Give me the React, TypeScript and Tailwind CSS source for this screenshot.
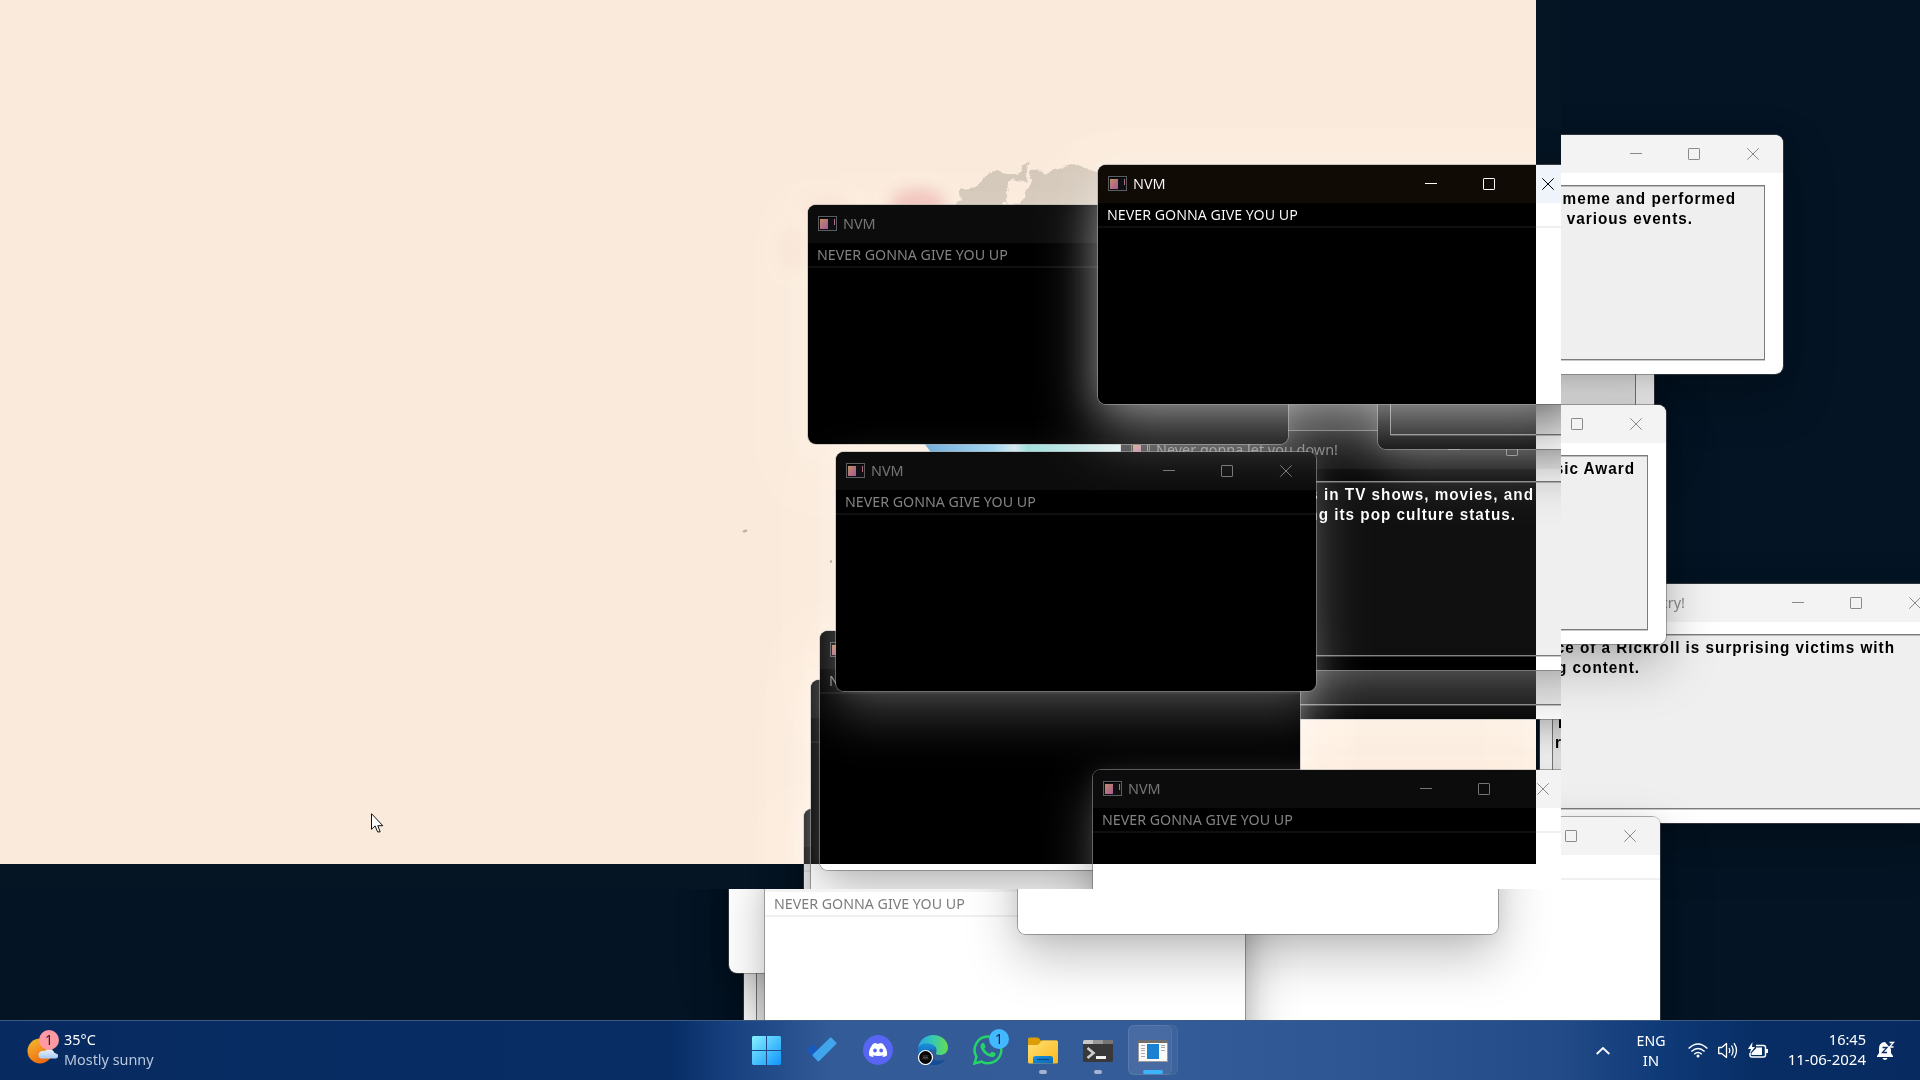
import type { ReactNode } from "react";

type Line = { text: string; place: string };
type WinProps = { at: string; title?: string; active?: boolean; lines?: Line[] };

const INACTIVE = "shadow-[0_0_0_1px_rgba(90,90,90,0.5),0_22px_52px_rgba(0,0,0,0.25),0_2px_20px_rgba(0,0,0,0.08)]";
const ACTIVE = "shadow-[0_0_0_1px_rgba(90,90,90,0.6),0_28px_60px_rgba(0,0,0,0.42),0_2px_36px_rgba(0,0,0,0.28)]";

function AppIcon() {
  return (
    <svg width="19" height="16" viewBox="0 0 19 16" shapeRendering="crispEdges">
      <rect width="19" height="15" fill="#a5a19d" />
      <rect x="1" y="1" width="17" height="13" fill="#efefec" />
      <rect x="1" y="1" width="17" height="1" fill="#fff" />
      <defs>
        <linearGradient id="pane" x1="0" y1="0" x2="1" y2="1">
          <stop offset="0" stopColor="#41709b" />
          <stop offset="1" stopColor="#56a868" />
        </linearGradient>
      </defs>
      <rect x="2" y="3" width="8" height="10" fill="url(#pane)" />
      <rect x="16" y="3" width="1" height="6" fill="#4f9276" />
    </svg>
  );
}

function Win({ at, title = "NVM", active = false, lines }: WinProps) {
  const ink = active ? "text-black" : "text-[#8a8a8a]";
  return (
    <section className={`absolute h-[239px] w-[480px] rounded-lg ${at} ${active ? ACTIVE : INACTIVE}`}>
      <div className="flex h-full flex-col overflow-hidden rounded-lg bg-white">
        <header className={`flex h-[38px] shrink-0 items-center pl-[10px] pr-6 ${active ? "bg-[#eef4f9]" : "bg-[#f3f3f3]"} ${ink}`}>
          <AppIcon />
          <span className="mb-[2px] ml-[6px] origin-left scale-x-[0.96] whitespace-nowrap text-[15px] leading-[20px]">{title}</span>
          <svg className="ml-auto shrink-0" width="129" height="12" viewBox="0 0 129 12" fill="none" stroke="currentColor">
            <path d="M0 5.5h12" />
            <rect x="58.5" y="0.5" width="11" height="11" rx="0.6" />
            <path d="M117.3 0.3l11.4 11.4M128.7 0.3l-11.4 11.4" />
          </svg>
        </header>
        {lines ? (
          <div className="ml-3 mt-3 h-[175px] w-[450px] shrink-0 border border-[#7c7c7c] bg-[#efefef] pt-[3px] font-['Liberation_Sans',sans-serif] text-[17px] font-bold leading-[20px] tracking-[1.1px] text-black shadow-[0_1px_0_#c8c8c8,inset_0_1px_0_#bcbcbc]">
            {lines.map((l) => (
              <p key={l.text} className={`scale-x-[0.9] whitespace-nowrap ${l.place}`}>{l.text}</p>
            ))}
          </div>
        ) : (
          <div className={`h-[25px] border-b-2 border-[#f0f0f0] pl-[9px] pt-px ${active ? "text-black" : "text-[#7d7d7d]"}`}>
            <span className="block h-[22px] origin-left scale-x-[0.948] whitespace-nowrap text-[15px] leading-[21px]">NEVER GONNA GIVE YOU UP</span>
          </div>
        )}
      </div>
    </section>
  );
}

function Wallpaper() {
  return (
    <svg className="absolute left-0 top-0" width="1561" height="889" viewBox="0 0 1561 889">
      <defs>
        <filter id="soft" x="-50%" y="-50%" width="200%" height="200%" colorInterpolationFilters="sRGB">
          <feGaussianBlur stdDeviation="7" />
        </filter>
        <filter id="edge" x="-10%" y="-10%" width="120%" height="120%" colorInterpolationFilters="sRGB">
          <feTurbulence type="fractalNoise" baseFrequency="0.08" numOctaves="4" seed="4" />
          <feDisplacementMap in="SourceGraphic" scale="10" />
          <feGaussianBlur stdDeviation="0.7" />
        </filter>
        <linearGradient id="stream">
          <stop offset="0" stopColor="#c07036" />
          <stop offset="0.35" stopColor="#7d3a16" />
          <stop offset="0.46" stopColor="#3d1e17" />
          <stop offset="0.52" stopColor="#802b30" />
          <stop offset="0.8" stopColor="#4a2424" />
          <stop offset="1" stopColor="#27171a" />
        </linearGradient>
      </defs>
      <g filter="url(#soft)">
        <ellipse cx="918" cy="204" rx="28" ry="15" fill="#103d44" />
        <ellipse cx="826" cy="207" rx="24" ry="10" fill="#081d2b" />
        <ellipse cx="795" cy="250" rx="14" ry="22" fill="#081b2a" />
      </g>
      <path
        filter="url(#edge)"
        fill="#2b3745"
        d="M950 206l12-5-2-12 18-2 4-10 18-5 14 2 8-1 7-12 1 4-5 14-14 4-6 8 4 14h-6l8 8h-61zM1010 212l14-16 8-24 20-1 20-6 28 8 12 14v25z"
      />
      <path d="M922 440h202v14H932z" fill="url(#stream)" />
      <ellipse cx="745" cy="531" rx="2.5" ry="1.2" fill="#43505c" transform="rotate(-20 745 531)" />
      <circle cx="831" cy="561.5" r="1.2" fill="#54616c" />
    </svg>
  );
}

function Cell({ children, dot }: { children: ReactNode; dot?: string }) {
  return (
    <div className="relative flex h-full w-[55px] items-center justify-center">
      {children}
      {dot && <span className={`absolute bottom-[6px] h-1 rounded-full ${dot}`} />}
    </div>
  );
}

function Taskbar() {
  return (
    <footer className="absolute bottom-0 left-0 flex h-[60px] w-full items-center border-t border-[#3d5a80] bg-[linear-gradient(90deg,#072b61_0px,#072d64_670px,#174080_730px,#325b97_830px,#345c98_1150px,#2d5692_1350px,#224b87_1560px,#0f3a78_1660px,#072d64_1760px,#072b61_1920px)] text-[15px] leading-[20px] text-white">
      <div className="flex w-[740px] items-center pl-[26px]">
        <svg width="34" height="38" viewBox="0 0 34 38" className="mt-[-8px]">
          <defs>
            <linearGradient id="sun" x1="0" y1="0" x2="0.6" y2="1"><stop stopColor="#f3bc2f" /><stop offset="1" stopColor="#f0680f" /></linearGradient>
            <linearGradient id="cloud" x1="0" y1="0" x2="0" y2="1"><stop stopColor="#eaf2fd" /><stop offset="1" stopColor="#a9c8f2" /></linearGradient>
          </defs>
          <circle cx="14" cy="23" r="12.500" fill="url(#sun)" />
          <path d="M14.500 30.500a4 4 0 0 1 0-7q2-1 4-.5a6 6 0 0 1 10 2q1-.3 1.500 .5a2.500 2.500 0 0 1-1 5z" fill="url(#cloud)" />
          <circle cx="23" cy="12" r="10" fill="#ff99a4" />
          <text x="23" y="17" textAnchor="middle" fontSize="14" fill="#331a1e">1</text>
        </svg>
        <div className="mb-1 ml-1 origin-left scale-x-[0.96]">
          <div>35°C</div>
          <div className="text-[#b9c7dc]">Mostly sunny</div>
        </div>
      </div>
      <nav className="flex h-full w-[440px]">
        <Cell>
          <svg width="29" height="29" viewBox="0 0 29 29" className="mb-[1px] mr-[2px]">
            <defs><linearGradient id="win" x1="0" y1="0" x2="1" y2="1"><stop stopColor="#86f1ff" /><stop offset="1" stopColor="#1094fb" /></linearGradient></defs>
            <path d="M1 0h13v14H0V1zM15 0h13l1 1v13H15zM0 15h14v14H1l-1-1zM15 15h14v13l-1 1H15z" fill="url(#win)" />
          </svg>
        </Cell>
        <Cell>
          <svg width="30" height="25" viewBox="0 0 30 25" className="mb-[2px] mr-[2px]">
            <path d="M.6 12.300l4.600-4.600q.8-.8 1.600 0l8.400 8.500-5 6q-1 1-2 0l-8-8q-.6-.9.400-1.900z" fill="#185abd" />
            <path d="M5.800 17.500L23 .8q.8-.8 1.600 0l4.600 4.700q.8.800 0 1.600L12.200 24q-.8.800-1.600 0l-4.800-5q-.8-.8 0-1.500z" fill="#41a5ee" />
          </svg>
        </Cell>
        <Cell>
          <svg width="30" height="30" viewBox="0 0 30 30" className="mb-[1px]">
            <circle cx="15" cy="15" r="15" fill="#5865f2" />
            <path d="M19.800 8.800a14 14 0 0 0-3-.9l-.5.900a13 13 0 0 0-2.700 0l-.5-.9a14 14 0 0 0-3 .9C7.200 12.500 5.500 16 6 20.200a12 12 0 0 0 4 1.900l.9-1.400q-1.300-.5-1.800-1 6 2.600 12 0-.8.600-1.900 1l.9 1.400a12 12 0 0 0 4-1.900c.500-4.200-1.300-7.700-4.300-11.400zM12 17.600a1.900 2 0 1 1 0-4 1.900 2 0 0 1 0 4zm6.200 0a1.900 2 0 1 1 0-4 1.900 2 0 0 1 0 4z" fill="#fff" />
          </svg>
        </Cell>
        <Cell>
          <svg width="30" height="30" viewBox="0 0 30 30" className="mb-[1px]">
            <defs>
              <linearGradient id="e1"><stop stopColor="#29a8e8" /><stop offset="0.5" stopColor="#35c8b4" /><stop offset="1" stopColor="#67dc4c" /></linearGradient>
              <linearGradient id="e2" x1="0" y1="0" x2="0" y2="1"><stop stopColor="#1a90dc" /><stop offset="1" stopColor="#0d50a0" /></linearGradient>
            </defs>
            <path d="M0 15q1-7 8-7 8 0 10 7-4-1-5 4 0 6 7 7 4 .5 7-1-5 5-12 5A15 15 0 0 1 0 15z" fill="url(#e2)" />
            <path d="M13 18q0 8 8 8 4 0 6.500-2-4 6-12 6-7-1-7-8 .5-7 6-8-2 1-1.500 4z" fill="#134e96" />
            <path d="M0 13.500C1 5 8 0 15 0c9 0 15 6 15 12.500 0 5-4 7.500-8 7.500-3 0-4.500-1-4-2 2-4-1-9-8-9.500C5 8.200 1 10 0 13.500z" fill="url(#e1)" />
            <circle cx="7.500" cy="22.500" r="7" fill="#050505" stroke="#fff" strokeWidth="1.200" />
            <path d="M4.500 21h6M5 22.500h5M4.500 23.800h6" stroke="#666" strokeWidth="0.700" />
          </svg>
        </Cell>
        <Cell>
          <svg width="30" height="30" viewBox="0 0 24 24" className="mb-[1px]" fill="#25d366">
            <path d="M17.472 14.382c-.297-.149-1.758-.867-2.030-.967-.273-.099-.471-.148-.670.150-.197.297-.767.966-.940 1.164-.173.199-.347.223-.644.075-.297-.150-1.255-.463-2.390-1.475-.883-.788-1.480-1.761-1.653-2.059-.173-.297-.018-.458.130-.606.134-.133.298-.347.446-.520.149-.174.198-.298.298-.497.099-.198.050-.371-.025-.520-.075-.149-.669-1.612-.916-2.207-.242-.579-.487-.500-.669-.510-.173-.008-.371-.010-.570-.010-.198 0-.520.074-.792.372-.272.297-1.040 1.016-1.040 2.479 0 1.462 1.065 2.875 1.213 3.074.149.198 2.096 3.200 5.077 4.487.709.306 1.262.489 1.694.625.712.227 1.360.195 1.871.118.571-.085 1.758-.719 2.006-1.413.248-.694.248-1.289.173-1.413-.074-.124-.272-.198-.570-.347" />
            <path d="M12 1.200A10.700 10.700 0 0 0 2.800 17.400L1.200 22.800l5.600-1.500A10.700 10.700 0 1 0 12 1.200z" fill="none" stroke="#25d366" strokeWidth="2" />
          </svg>
          <span className="absolute left-[29px] top-2 flex h-5 w-5 items-center justify-center rounded-full bg-[#42b8ff] text-[14px] text-[#0a2038]">1</span>
        </Cell>
        <Cell dot="w-2 bg-[#a3b4d0]">
          <svg width="30" height="27" viewBox="0 0 30 27">
            <defs>
              <linearGradient id="fo" x1="0" y1="0" x2="1" y2="1"><stop stopColor="#ffe07a" /><stop offset="1" stopColor="#fbb915" /></linearGradient>
              <linearGradient id="fb" x1="0" y1="0" x2="1" y2="1"><stop stopColor="#1c92dd" /><stop offset="1" stopColor="#0a68b8" /></linearGradient>
            </defs>
            <path d="M0 2q0-1.500 1.500-1.500h7.700q1 0 1.600.6L13 3.500h15.500Q30 3.500 30 5v8H0z" fill="#dd9d08" />
            <path d="M0 8h9q1 0 1.800-.8l2.400-3q.6-.7 1.500-.7H28.500Q30 3.500 30 5v20q0 1.500-1.500 1.500h-27Q0 26.500 0 25z" fill="url(#fo)" />
            <path d="M5 26.500v-5q0-2.500 2.500-2.500h15q2.500 0 2.500 2.500v5z" fill="url(#fb)" />
            <path d="M9 22.500h12" stroke="#074a8c" strokeWidth="1.200" />
          </svg>
        </Cell>
        <Cell dot="w-2 bg-[#a3b4d0]">
          <svg width="30" height="22" viewBox="0 0 30 22">
            <rect width="30" height="22" rx="1.500" fill="#393939" />
            <path d="M1.500 0h27Q30 0 30 1.500V4H0V1.500Q0 0 1.500 0z" fill="#c9c9c9" />
            <path d="M10 0h10v4H10z" fill="#999" /><path d="M20 0h8.500Q30 0 30 1.500V4H20z" fill="#757575" />
            <path d="M4.500 8l6 5-6 5" fill="none" stroke="#cfcfcf" strokeWidth="2.600" />
            <rect x="13" y="16" width="10" height="3" fill="#f2f2f2" />
          </svg>
        </Cell>
        <div className="relative flex h-full w-[55px] items-center justify-center">
          <span className="absolute left-[3px] top-1 h-[50px] w-[50px] rounded-md border border-white/5 bg-white/5" />
          <span className="absolute left-[3px] top-1 h-[50px] w-[44px] rounded-md border border-white/5 bg-white/5" />
          <svg width="30" height="22" viewBox="0 0 30 22" className="relative" shapeRendering="crispEdges">
            <rect width="30" height="22" fill="#9a9a9a" />
            <rect width="30" height="3" fill="#6f6f6f" />
            <rect x="1" y="3" width="28" height="18" fill="#fafafa" />
            <rect x="9" y="4" width="12" height="15" fill="#1a80d2" />
            <path d="M3 5.500h4M3 8.500h4M3 10.500h4M3 13.500h4M3 16.500h4M23 5.500h4M23 7.500h4M23 10.500h4" stroke="#aaa" />
          </svg>
          <span className="absolute bottom-[6px] h-1 w-5 rounded-full bg-[#3cb4fb]" />
        </div>
      </nav>
      <div className="flex h-full flex-1 items-center justify-end pr-[25px]">
        <svg width="14" height="8" viewBox="0 0 14 8" fill="none" stroke="#fff" strokeWidth="1.800"><path d="M.7 7L7 1l6.300 6" /></svg>
        <div className="mb-[2px] ml-[26px] w-[30px] text-center"><div className="-mx-2 scale-x-[0.94]">ENG</div><div>IN</div></div>
        <svg className="ml-[22px]" width="20" height="15" viewBox="0 0 20 15" fill="none" stroke="#fff" strokeWidth="1.400">
          <path d="M.6 5.500Q10-3.500 19.400 5.500M3.400 8.400q6.600-6 13.200 0M6.200 11.200q3.800-3.300 7.600 0" />
          <circle cx="10" cy="13" r="1.500" fill="#fff" stroke="none" />
        </svg>
        <svg className="ml-[10px]" width="20" height="17" viewBox="0 0 20 17" fill="none" stroke="#fff" strokeWidth="1.300">
          <path d="M.7 5.500h3L8.500 1.500v14l-4.800-4h-3z" strokeLinejoin="round" />
          <path d="M11 6q1.600 2.500 0 5M13.500 3.500q3.200 5 0 10M16 1.200q5 7.300 0 14.600" />
        </svg>
        <svg className="ml-[10px]" width="20" height="17" viewBox="0 0 20 17">
          <path d="M8 3.500h7.500q2 0 2 2v7.500q0 2-2 2H4q-2 0-2-2v-2" fill="none" stroke="#fff" strokeWidth="1.500" />
          <path d="M18 7h2v4h-2z" fill="#fff" />
          <path d="M8 5.500h6v7.500H3.500V11L8 6.500z" fill="#fff" />
          <path d="M4.500 0L0 7h3l-1.500 5L7 5H4z" fill="#fff" />
        </svg>
        <div className="mb-1 ml-[18px] w-[80px] text-right"><div className="origin-right scale-x-[0.97]">16:45</div><div>11-06-2024</div></div>
        <svg className="ml-[11px] shrink-0" width="18" height="19" viewBox="0 0 18 19">
          <path d="M8 1Q2 1.500 2 7.500v4.500L0 15v1h16v-1l-2-3V8z" fill="#fff" />
          <path d="M5.500 17h5q-.5 2-2.500 2t-2.500-2z" fill="#fff" />
          <path d="M5.500 6.500H10L5.500 11.500H10" fill="none" stroke="#0a2d63" strokeWidth="1.300" />
          <path d="M12.500 1.500h4l-4 4.500h4" fill="none" stroke="#fff" strokeWidth="1.300" />
        </svg>
      </div>
    </footer>
  );
}

export default function App() {
  return (
    <main className="relative h-[1080px] w-[1920px] overflow-hidden bg-[#041424] font-['Noto_Sans','Open_Sans',sans-serif]">
      <Win at="left-[1174px] top-[200px]" lines={[]} />
      <Win
        at="left-[1303px] top-[135px]"
        lines={[
          { text: "meme and performed", place: "origin-right text-right mr-[28px]" },
          { text: "at various events.", place: "origin-right text-right mr-[71px]" },
        ]}
      />
      <Win
        at="left-[1465px] top-[584px]"
        title="Never gonna make you cry!"
        lines={[
          { text: "nce of a Rickroll is surprising victims with", place: "origin-right text-right mr-[31px]" },
          { text: "g content.", place: "origin-right text-right mr-[286px]" },
        ]}
      />
      <Win at="left-[1186px] top-[405px]" lines={[{ text: "sic Award", place: "origin-right text-right mr-[12px]" }]} />
      <Win at="left-[1180px] top-[817px]" />
      <Win at="left-[744px] top-[840px]" lines={[]} />
      <Win at="left-[729px] top-[734px]" />
      <Win at="left-[765px] top-[854px]" />
      <Win at="left-[1018px] top-[695px]" />

      <div className="absolute left-0 top-0 h-[889px] w-[1561px] overflow-hidden bg-[#061524]">
        <Wallpaper />
        <Win
          at="left-[1540px] top-[659px]"
          lines={[
            { text: "In", place: "origin-left ml-[5px]" },
            { text: "r", place: "origin-left ml-[2px]" },
          ]}
        />
        <Win at="left-[1200px] top-[230px]" lines={[]} />
        <Win at="left-[1200px] top-[480px]" lines={[]} />
        <Win
          at="left-[1121px] top-[431px]"
          title="Never gonna let you down!"
          lines={[
            { text: "s in TV shows, movies, and", place: "origin-right text-right mr-[48px]" },
            { text: "ng its pop culture status.", place: "origin-right text-right mr-[66px]" },
          ]}
        />
        <Win at="left-[1378px] top-[210px]" lines={[]} />
        <Win at="left-[808px] top-[205px]" />
        <Win at="left-[804px] top-[809px]" />
        <Win at="left-[811px] top-[680px]" />
        <Win at="left-[820px] top-[631px]" />
        <Win at="left-[836px] top-[452px]" />
        <Win at="left-[1093px] top-[770px]" />
        <Win at="left-[1098px] top-[165px]" active />
        <div className="absolute left-0 top-0 h-[864px] w-[1536px] backdrop-invert" />
      </div>

      <svg className="absolute left-[371px] top-[813px]" width="13" height="20" viewBox="0 0 13 20">
        <path d="M.5.700v15.600l3.600-3.400 2.500 6h2.600l-2.400-6.200h5z" fill="#fff" stroke="#111" />
      </svg>
      <Taskbar />
    </main>
  );
}
